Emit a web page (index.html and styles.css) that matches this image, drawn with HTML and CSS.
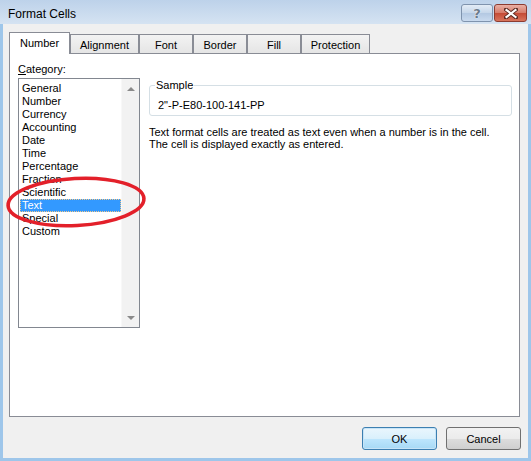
FILE: index.html
```html
<!DOCTYPE html>
<html lang="en">

<head>
  <meta charset="UTF-8">
  <meta name="viewport" content="width=device-width, initial-scale=1.0">
  <title>Format Cells</title>
  <link rel="stylesheet" href="styles.css">
</head>

<body>
  <div class="window">
    <div class="titlebar">
      <span class="title">Format Cells</span>
      <div class="caption-buttons">
        <button class="cap-btn help">?</button>
        <button class="cap-btn close">
          <svg width="14" height="11" viewBox="0 0 14 11">
            <path d="M2 1.5 L12 9.5 M12 1.5 L2 9.5" stroke="#5a2a22" stroke-width="4" stroke-linecap="square" />
            <path d="M2.5 2 L11.5 9 M11.5 2 L2.5 9" stroke="#fff" stroke-width="2.2" stroke-linecap="square" />
          </svg>
        </button>
      </div>
    </div>

    <div class="client">
      <div class="tabs">
        <div class="tab active">Number</div>
        <div class="tab tab-wide">Alignment</div>
        <div class="tab">Font</div>
        <div class="tab">Border</div>
        <div class="tab">Fill</div>
        <div class="tab tab-wide">Protection</div>
      </div>

      <div class="panel">
        <div class="cat-label"><u>C</u>ategory:</div>
        <div class="panel-row">
          <div class="listbox">
            <ul class="items">
              <li>General</li>
              <li>Number</li>
              <li>Currency</li>
              <li>Accounting</li>
              <li>Date</li>
              <li>Time</li>
              <li>Percentage</li>
              <li>Fraction</li>
              <li>Scientific</li>
              <li class="selected">Text</li>
              <li>Special</li>
              <li>Custom</li>
            </ul>
            <div class="scrollbar">
              <span class="arrow up"></span>
              <span class="arrow down"></span>
            </div>
          </div>

          <div class="details">
            <fieldset class="sample">
              <legend>Sample</legend>
              <div class="sample-text">2"-P-E80-100-141-PP</div>
            </fieldset>
            <p class="desc">Text format cells are treated as text even when a number is in the cell.<br>The cell is displayed exactly as entered.</p>
          </div>
        </div>
      </div>

      <div class="footer">
        <button class="btn default">OK</button>
        <button class="btn">Cancel</button>
      </div>
    </div>

    <svg class="mark" width="146" height="56" viewBox="0 0 146 56">
      <ellipse cx="73" cy="28" rx="68" ry="23.5" fill="none" stroke="#e3202a" stroke-width="3.6" transform="rotate(-3 73 28)" />
    </svg>
  </div>
</body>

</html>
```

FILE: styles.css
```css
body {
  margin: 0;
  font-family: "Liberation Sans", Arial, sans-serif;
  font-size: 11px;
  color: #000;
}

.window {
  position: relative;
  width: 531px;
  height: 461px;
  display: flex;
  flex-direction: column;
  background: #c9dcf0;
}

/* title bar */
.titlebar {
  height: 25px;
  display: flex;
  align-items: flex-start;
  background: linear-gradient(#bdd2ea, #d5e3f2);
}

.title {
  font-size: 12px;
  margin: 7px 0 0 8px;
}

.caption-buttons {
  margin: 4px 4px 0 auto;
  display: flex;
  gap: 1px;
}

.cap-btn {
  height: 18px;
  padding: 0;
  border-radius: 3px;
  display: flex;
  align-items: center;
  justify-content: center;
}

.help {
  width: 32px;
  border: 1px solid #7f93ad;
  background: linear-gradient(#e3ecf6, #c5d6ea 50%, #b3c8e2 51%, #c9daee);
  font-family: "DejaVu Sans", sans-serif;
  font-size: 13px;
  font-weight: bold;
  color: #6b7a8c;
  text-shadow: 0 0 1px #fff, 0 0 1px #fff;
}

.close {
  width: 33px;
  border: 1px solid #8c3b30;
  background: linear-gradient(#e9b0a5, #d67a68 50%, #c44a35 51%, #d8745c);
}

/* client area */
.client {
  flex: 1;
  background: #f0f0f0;
  border: 3px solid #9ec6ea;
  border-top: 0;
  padding: 8px 8px 8px 6px;
  display: flex;
  flex-direction: column;
}

.tabs {
  display: flex;
  align-items: flex-end;
  height: 21px;
  position: relative;
  z-index: 1;
}

.tab {
  width: 52px;
  height: 18px;
  line-height: 20px;
  text-align: center;
  border: 1px solid #898c95;
  border-bottom: 0;
  background: linear-gradient(#f3f3f3, #e5e5e5);
}

.tab-wide {
  width: 67px;
}

.tab.active {
  width: 59px;
  height: 21px;
  line-height: 21px;
  margin-bottom: -1px;
  background: #fff;
}

.panel {
  width: 511px;
  height: 364px;
  box-sizing: border-box;
  border: 1px solid #898c95;
  background: #fff;
  padding: 9px 0 0 8px;
}

.cat-label {
  line-height: 13px;
}

.panel-row {
  display: flex;
  margin-top: 2px;
}

/* category list */
.listbox {
  width: 122px;
  height: 250px;
  box-sizing: border-box;
  border: 1px solid #828790;
  display: flex;
}

.items {
  list-style: none;
  margin: 0;
  padding: 3px 0 0 1px;
  width: 101px;
}

.items li {
  line-height: 13px;
  padding-left: 2px;
}

.items li.selected {
  background: #3399ff;
  color: #fff;
  outline: 1px dotted #f3c98a;
  outline-offset: -1px;
}

.scrollbar {
  width: 17px;
  margin-left: auto;
  background: #f2f2f2;
  border-left: 1px solid #f8f8f8;
  display: flex;
  flex-direction: column;
  justify-content: space-between;
  align-items: center;
  padding: 8px 0 7px;
}

.arrow {
  width: 0;
  height: 0;
  border-left: 4px solid transparent;
  border-right: 4px solid transparent;
}

.arrow.up {
  border-bottom: 4px solid #8a8a8a;
}

.arrow.down {
  border-top: 4px solid #8a8a8a;
}

/* details */
.details {
  margin-left: 9px;
  width: 363px;
}

.sample {
  margin: 1px 0 0;
  padding: 7px 8px 3px 5px;
  border: 1px solid #d5dfe5;
  border-radius: 3px;
}

.sample legend {
  padding: 0 1px;
  line-height: 13px;
}

.sample-text {
  line-height: 13px;
  padding-left: 3px;
}

.desc {
  margin: 10px 0 0;
  line-height: 12px;
}

/* buttons */
.footer {
  display: flex;
  justify-content: flex-end;
  gap: 9px;
  margin-top: 10px;
  margin-right: -1px;
}

.btn {
  width: 75px;
  height: 23px;
  font-family: "Liberation Sans", Arial, sans-serif;
  font-size: 11px;
  color: #000;
  border: 1px solid #707070;
  border-radius: 3px;
  background: linear-gradient(#f2f2f2, #ebebeb 50%, #dddddd 51%, #cfcfcf);
}

.btn.default {
  border-color: #3c7fb1;
  background: linear-gradient(#eaf6fd, #d9f0fc 50%, #bee6fd 51%, #a7d9f5);
  box-shadow: inset 0 0 0 1px #c7e4f7;
}

/* red marker drawn over the dialog */
.mark {
  position: absolute;
  left: 3px;
  top: 174px;
}
```
